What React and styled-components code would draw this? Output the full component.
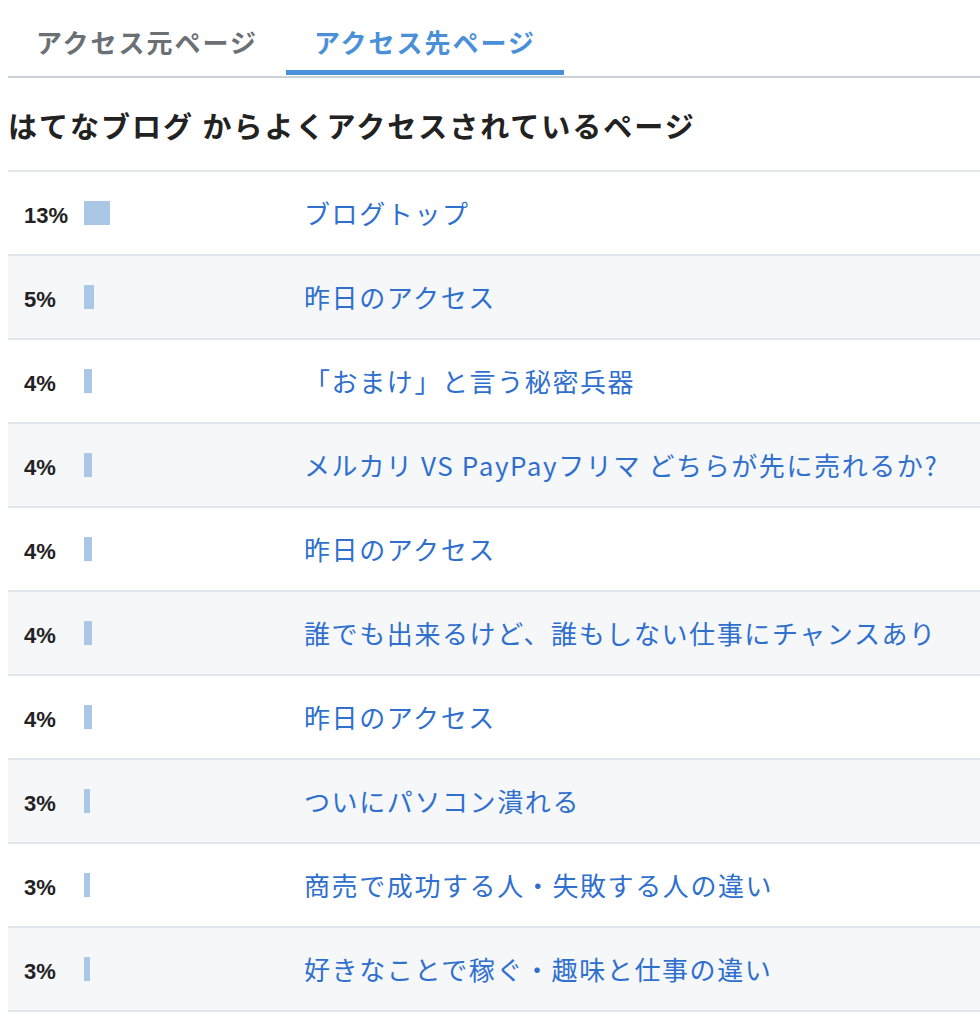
import React from "react";
import styled, { createGlobalStyle } from "styled-components";

const Global = createGlobalStyle`
  html, body { margin: 0; padding: 0; background: #fff; }
  body { font-family: "Noto Sans CJK JP", "Noto Sans", sans-serif; color: #222; }
`;

const Page = styled.div`
  padding-left: 8px;
  width: 972px;
`;

const TabBar = styled.div`
  display: flex;
  border-bottom: 2px solid #c8d1d8;
`;

const Tab = styled.div`
  width: 278px;
  box-sizing: border-box;
  padding: 24px 0 10px;
  margin-bottom: 1px;
  text-align: center;
  font-size: 26px;
  line-height: 36px;
  font-weight: 700;
  letter-spacing: 2px;
  color: ${(p) => (p.$active ? "#4a90d9" : "#6b7075")};
  border-bottom: 5px solid ${(p) => (p.$active ? "#4a90d9" : "transparent")};
`;

const Heading = styled.h2`
  margin: 0;
  padding: 27px 0 25px;
  font-size: 29px;
  line-height: 40px;
  font-weight: 700;
  letter-spacing: 2px;
  color: #222;
`;

const Table = styled.div`
  border-top: 2px solid #e1e6ea;
`;

const Row = styled.div`
  display: grid;
  grid-template-columns: 76px 220px 1fr;
  align-items: center;
  height: 84px;
  box-sizing: border-box;
  border-bottom: 2px solid #e1e6ea;
  background: ${(p) => (p.$alt ? "#f5f7f9" : "#fff")};
`;

const Pct = styled.div`
  padding-left: 16px;
  padding-top: 5px;
  font-family: "Liberation Sans", Arial, sans-serif;
  font-weight: 700;
  font-size: 22px;
  color: #222;
`;

const BarCell = styled.div`
  display: flex;
  align-items: center;
`;

const Bar = styled.div`
  height: 24px;
  background: #abc7e6;
`;

const Link = styled.a`
  font-size: 26px;
  line-height: 36px;
  letter-spacing: 1.6px;
  color: #2f6fce;
  text-decoration: none;
  white-space: nowrap;
`;

const rows = [
  [13, "ブログトップ"],
  [5, "昨日のアクセス"],
  [4, "「おまけ」と言う秘密兵器"],
  [4, "メルカリ VS PayPayフリマ どちらが先に売れるか?"],
  [4, "昨日のアクセス"],
  [4, "誰でも出来るけど、誰もしない仕事にチャンスあり"],
  [4, "昨日のアクセス"],
  [3, "ついにパソコン潰れる"],
  [3, "商売で成功する人・失敗する人の違い"],
  [3, "好きなことで稼ぐ・趣味と仕事の違い"],
];

export default function App() {
  return (
    <Page>
      <Global />
      <TabBar>
        <Tab>アクセス元ページ</Tab>
        <Tab $active>アクセス先ページ</Tab>
      </TabBar>
      <Heading>はてなブログ からよくアクセスされているページ</Heading>
      <Table>
        {rows.map(([p, t], i) => (
          <Row key={i} $alt={i % 2 === 1}>
            <Pct>{p}%</Pct>
            <BarCell>
              <Bar style={{ width: p * 2 }} />
            </BarCell>
            <Link href="#">{t}</Link>
          </Row>
        ))}
      </Table>
    </Page>
  );
}
